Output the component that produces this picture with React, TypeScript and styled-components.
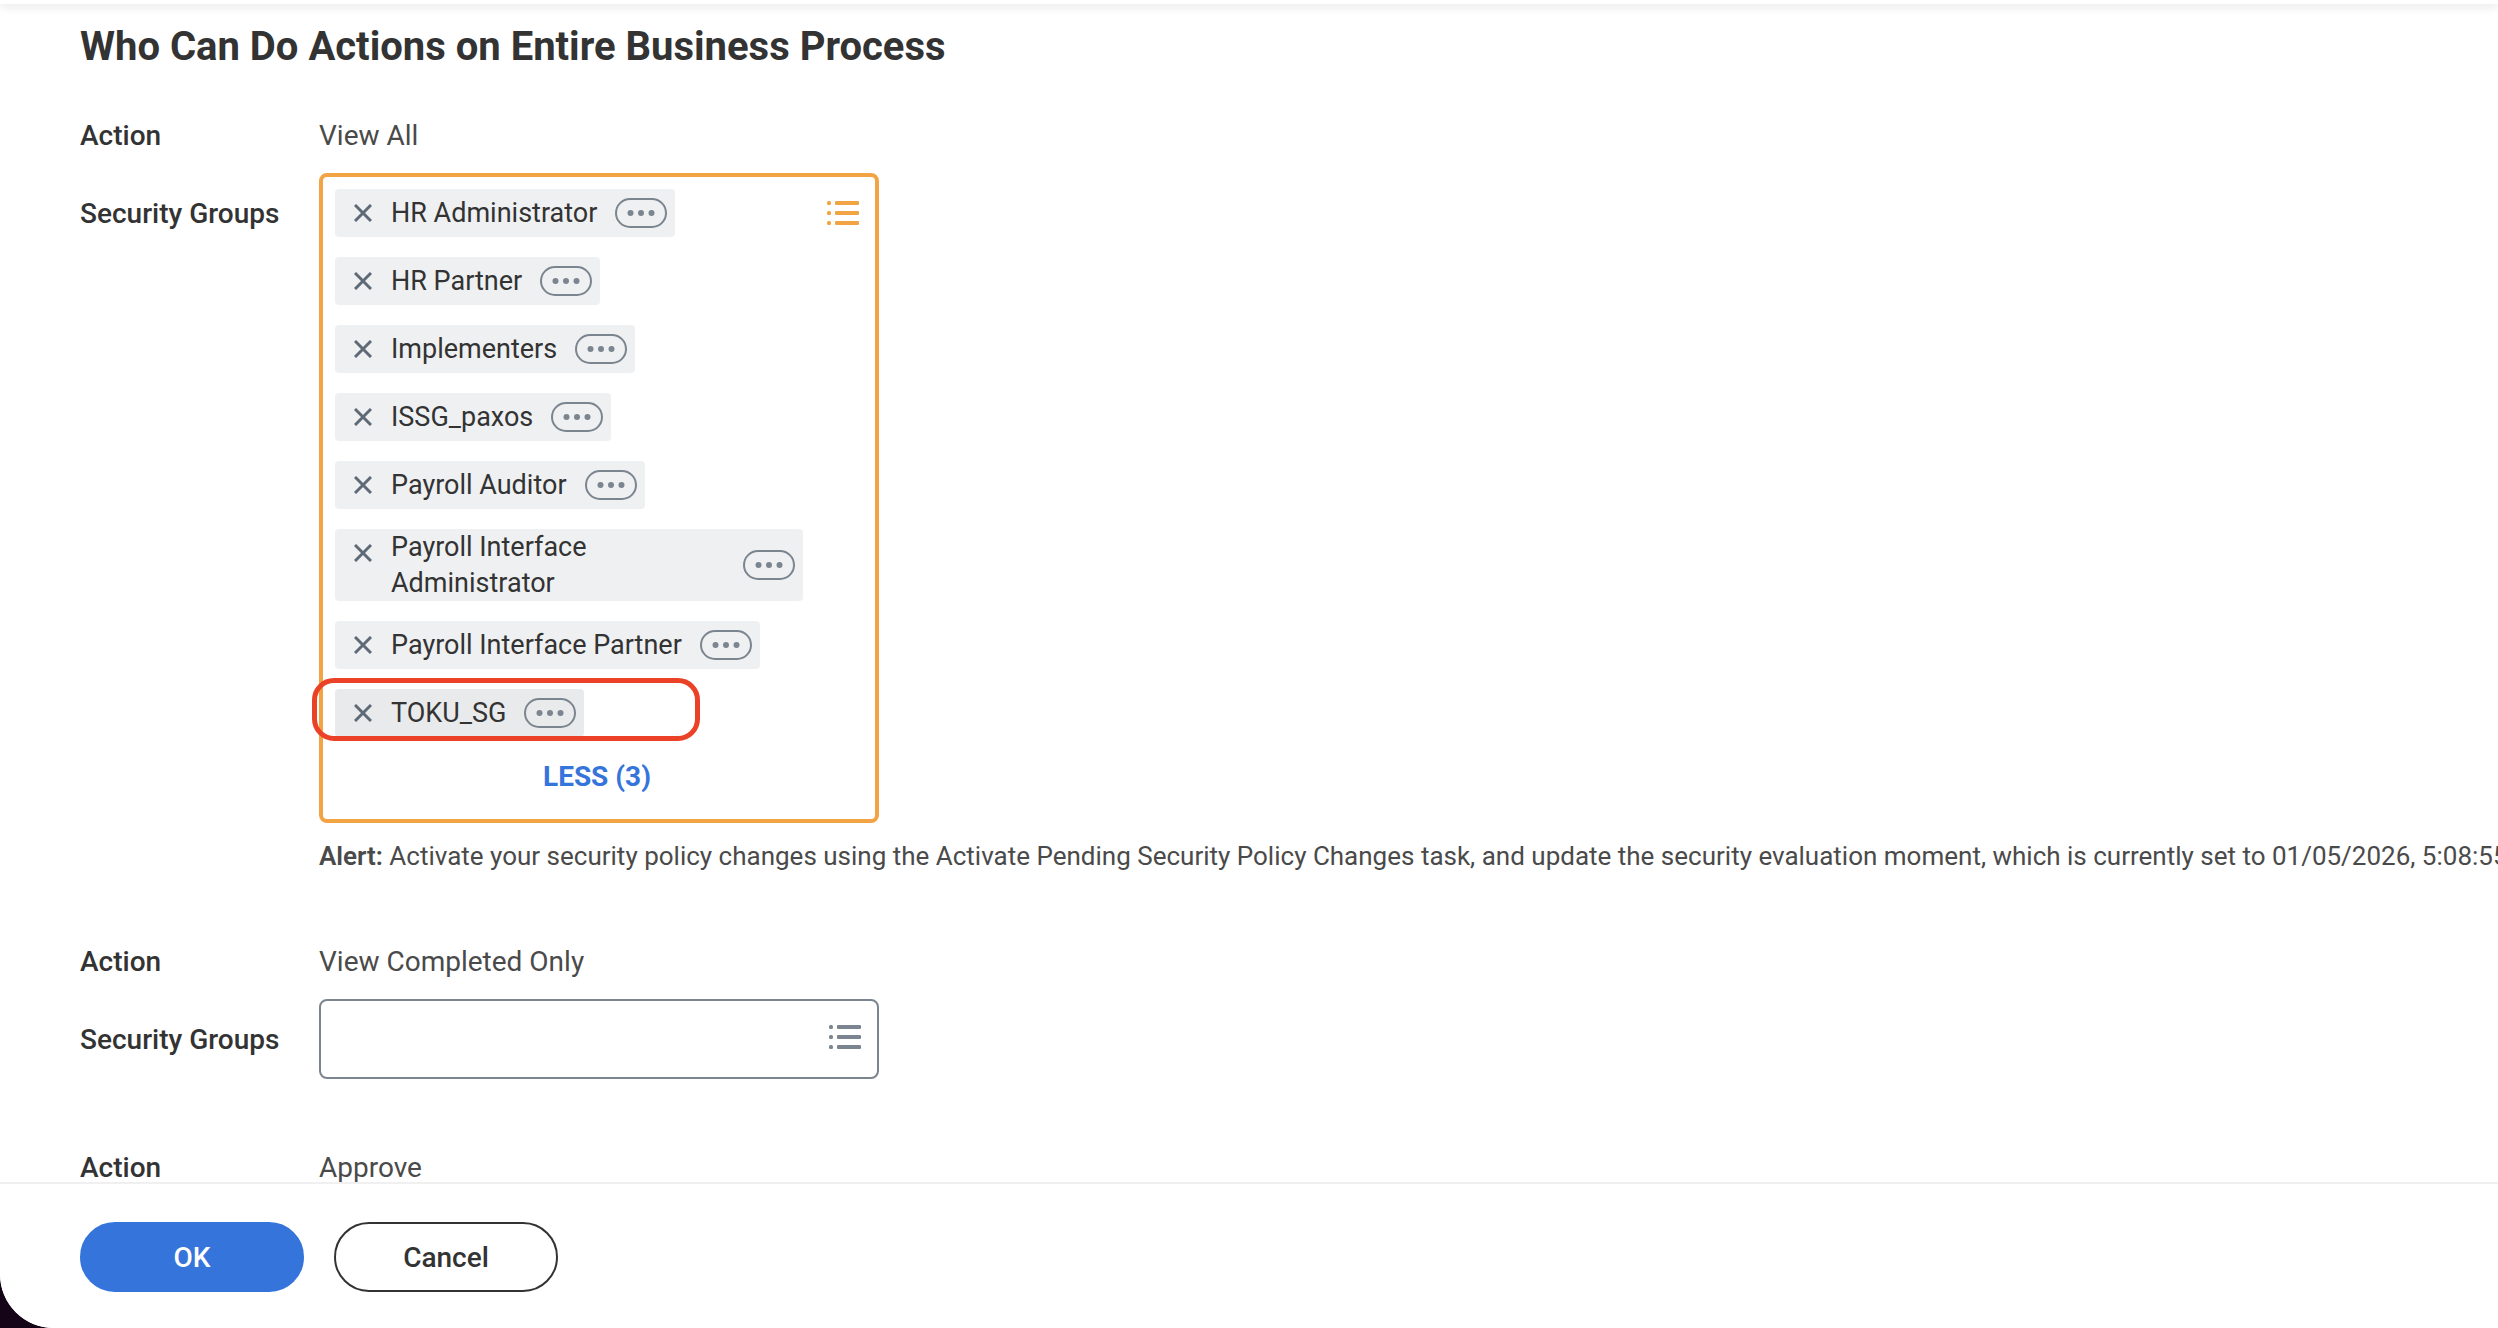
import React from "react";
import styled, { createGlobalStyle } from "styled-components";

const GlobalStyle = createGlobalStyle`
  * { box-sizing: border-box; }
  body {
    margin: 0;
    background: #150318;
    font-family: Roboto, "Liberation Sans", sans-serif;
    color: #333333;
  }
  h1, p, ul { margin: 0; padding: 0; }
  button, input { font: inherit; color: inherit; }
`;

const Shell = styled.div`
  display: flex;
  flex-direction: column;
  height: 100vh;
  overflow: hidden;
  background: #ffffff;
  border-bottom-left-radius: 54px;
`;

const TopBar = styled.header`
  flex: none;
  height: 4px;
  background: #ffffff;
  box-shadow: 0 2px 10px rgba(0, 0, 0, 0.16);
`;

const Content = styled.main`
  flex: 1;
  min-height: 0;
  overflow: hidden;
  padding: 19px 0 0 80px;
`;

const Title = styled.h1`
  font-size: 40px;
  line-height: 48px;
  font-weight: 700;
  margin-bottom: 47px;
`;

const Policy = styled.section`
  display: grid;
  grid-template-columns: 239px minmax(0, 1fr);
  row-gap: 19px;
  margin-bottom: 71px;
`;

const Label = styled.label<{ $field?: boolean }>`
  font-size: 28px;
  line-height: 36px;
  font-weight: 500;
  padding-top: ${(p) => (p.$field ? "23px" : "0")};
`;

const Value = styled.output`
  font-size: 28px;
  line-height: 36px;
  color: #4a4a4a;
`;

const Field = styled.div<{ $alert?: boolean }>`
  position: relative;
  display: flex;
  align-items: flex-start;
  justify-content: space-between;
  width: 560px;
  min-height: 80px;
  border: ${(p) => (p.$alert ? "4px solid #f2a444" : "2px solid #7b858f")};
  border-radius: 8px;
  padding: ${(p) => (p.$alert ? "12px 16px 22px 12px" : "24px 16px")};
`;

const Pills = styled.ul`
  list-style: none;
  display: flex;
  flex-direction: column;
  align-items: flex-start;
  gap: 20px;
  width: 468px;
`;

const Pill = styled.li<{ $marked?: boolean }>`
  display: flex;
  align-items: center;
  min-height: 48px;
  padding-right: 8px;
  border-radius: 4px;
  background: ${(p) => (p.$marked ? "#e9eaec" : "#eff0f2")};
`;

const Remove = styled.button`
  align-self: flex-start;
  display: flex;
  align-items: center;
  justify-content: center;
  width: 56px;
  height: 48px;
  padding: 0;
  border: 0;
  background: none;
  flex: none;
`;

const PillText = styled.span`
  flex: 1;
  font-size: 27px;
  line-height: 36px;
`;

const More = styled.button`
  display: flex;
  align-items: center;
  justify-content: center;
  width: 52px;
  height: 30px;
  margin-left: 18px;
  padding: 0;
  border: 2px solid #7b858f;
  border-radius: 15px;
  background: none;
  flex: none;
`;

const IconButton = styled.button`
  display: flex;
  padding: 0;
  border: 0;
  background: none;
`;

const Prompt = styled.div`
  display: flex;
  height: 48px;
  align-items: center;
`;

const Highlight = styled.div`
  position: absolute;
  left: -11px;
  bottom: 78px;
  width: 388px;
  height: 63px;
  border: 5px solid #eb4227;
  border-radius: 22px;
  pointer-events: none;
`;

const Stack = styled.div`
  display: flex;
  flex-direction: column;
  flex: 1;
  gap: 20px;
`;

const LessRow = styled.div`
  display: flex;
  justify-content: center;
`;

const Less = styled.button`
  padding: 0;
  border: 0;
  background: none;
  color: #3574db;
  font-size: 28px;
  line-height: 40px;
  font-weight: 700;
`;

const PillArea = styled.div`
  display: flex;
  justify-content: space-between;
`;

const SearchInput = styled.input`
  flex: 1;
  min-width: 0;
  height: 28px;
  padding: 0;
  border: 0;
  outline: 0;
  background: none;
  font-size: 26px;
`;

const AlertText = styled.p`
  margin-top: 16px;
  font-size: 26px;
  line-height: 34px;
  white-space: nowrap;
  color: #4a4a4a;

  strong {
    font-weight: 600;
  }
`;

const Footer = styled.footer`
  flex: none;
  display: flex;
  gap: 30px;
  padding: 38px 80px 36px;
  border-top: 2px solid #f0f0f0;
  background: #ffffff;
`;

const Action = styled.button<{ $primary?: boolean }>`
  width: 224px;
  height: 70px;
  border-radius: 35px;
  border: 2px solid ${(p) => (p.$primary ? "#3574db" : "#333333")};
  background: ${(p) => (p.$primary ? "#3574db" : "#ffffff")};
  color: ${(p) => (p.$primary ? "#ffffff" : "#333333")};
  font-size: 28px;
  font-weight: 500;
`;

const CloseIcon = () => (
  <svg width="18" height="18" viewBox="0 0 18 18" stroke="#5f6a77" strokeWidth="3" fill="none" aria-hidden="true">
    <path d="M1 1L17 17M17 1L1 17" />
  </svg>
);

const DotsIcon = () => (
  <svg width="28" height="6" viewBox="0 0 28 6" fill="#7b858f" aria-hidden="true">
    <circle cx="3.5" cy="3" r="3" />
    <circle cx="14" cy="3" r="3" />
    <circle cx="24.5" cy="3" r="3" />
  </svg>
);

const ListIcon = ({ color }: { color: string }) => (
  <svg width="32" height="24" viewBox="0 0 32 24" fill={color} aria-hidden="true">
    {[0, 10, 20].map((y) => (
      <g key={y}>
        <rect x="0" y={y} width="4" height="4" rx="1.5" />
        <rect x="8" y={y} width="24" height="4" rx="1" />
      </g>
    ))}
  </svg>
);

const groups = [
  "HR Administrator",
  "HR Partner",
  "Implementers",
  "ISSG_paxos",
  "Payroll Auditor",
  "Payroll Interface Administrator",
  "Payroll Interface Partner",
  "TOKU_SG",
];

export default function App() {
  return (
    <>
      <GlobalStyle />
      <Shell>
        <TopBar />
        <Content>
          <Title>Who Can Do Actions on Entire Business Process</Title>
          <Policy>
            <Label htmlFor="action-all">Action</Label>
            <Value id="action-all">View All</Value>
            <Label as="span" $field id="groups-all">Security Groups</Label>
            <div>
              <Field $alert role="group" aria-labelledby="groups-all">
                <Stack>
                  <PillArea>
                    <Pills>
                      {groups.map((name) => (
                        <Pill key={name} $marked={name === "TOKU_SG"}>
                          <Remove aria-label={`Remove ${name}`}>
                            <CloseIcon />
                          </Remove>
                          <PillText>{name}</PillText>
                          <More aria-label={`Related actions for ${name}`}>
                            <DotsIcon />
                          </More>
                        </Pill>
                      ))}
                    </Pills>
                    <Prompt>
                      <IconButton aria-label="Open prompt">
                        <ListIcon color="#f2a444" />
                      </IconButton>
                    </Prompt>
                  </PillArea>
                  <LessRow>
                    <Less>LESS (3)</Less>
                  </LessRow>
                </Stack>
                <Highlight />
              </Field>
              <AlertText>
                <strong>Alert:</strong> Activate your security policy changes using the Activate Pending Security
                Policy Changes task, and update the security evaluation moment, which is currently set to
                01/05/2026, 5:08:55
              </AlertText>
            </div>
          </Policy>
          <Policy>
            <Label htmlFor="action-completed">Action</Label>
            <Value id="action-completed">View Completed Only</Value>
            <Label htmlFor="groups-completed" $field>Security Groups</Label>
            <Field>
              <SearchInput id="groups-completed" type="text" />
              <IconButton aria-label="Open prompt">
                <ListIcon color="#7b858f" />
              </IconButton>
            </Field>
          </Policy>
          <Policy>
            <Label htmlFor="action-approve">Action</Label>
            <Value id="action-approve">Approve</Value>
          </Policy>
        </Content>
        <Footer>
          <Action $primary>OK</Action>
          <Action>Cancel</Action>
        </Footer>
      </Shell>
    </>
  );
}
